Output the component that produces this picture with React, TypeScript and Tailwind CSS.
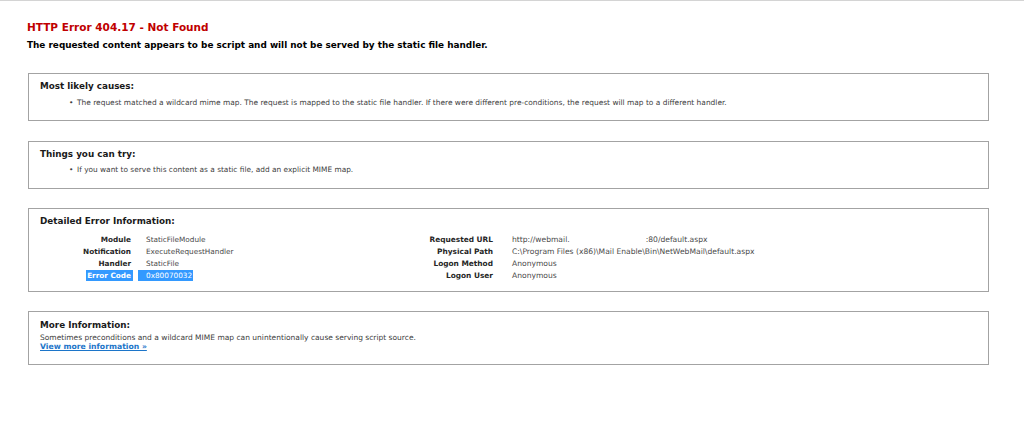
import React from "react";

const font = "font-['Verdana','DejaVu_Sans',sans-serif]";

const leftRows = [
  { label: "Module", value: "StaticFileModule" },
  { label: "Notification", value: "ExecuteRequestHandler" },
  { label: "Handler", value: "StaticFile" },
  { label: "Error Code", value: "0x80070032", selected: true },
];

function Box({ title, children, className = "" }: { title: string; children: React.ReactNode; className?: string }) {
  return (
    <div className={`border border-[#a3a3a3] pl-[11px] pt-[7px] ${className}`}>
      <div className="text-[8.8px] leading-[11px] font-bold text-[#1a1a1a]">{title}</div>
      {children}
    </div>
  );
}

export default function App() {
  return (
    <div className={`min-h-[443px] bg-white border-t border-[#d4d4d4] ${font}`}>
      <div className="pl-[27px] pr-[35px]">
        <h2 className="mt-[20px] text-[10.5px] leading-[13px] font-bold text-[#c00000]">
          HTTP Error 404.17 - Not Found
        </h2>
        <h3 className="mt-[6px] text-[8.9px] leading-[11px] font-bold text-black">
          The requested content appears to be script and will not be served by the static file handler.
        </h3>

        <div className="ml-[1px] mt-[22px] flex flex-col">
          <Box title="Most likely causes:" className="pb-[12px]">
            <div className="mt-[6px] flex text-[7.45px] leading-[10px] text-[#404040]">
              <span className="ml-[29px] w-[8px]">•</span>
              <span>
                The request matched a wildcard mime map. The request is mapped to the static file handler. If there were different pre-conditions, the request will map to a different handler.
              </span>
            </div>
          </Box>

          <Box title="Things you can try:" className="mt-[20px] pb-[13px]">
            <div className="mt-[5px] flex text-[7.4px] leading-[10px] text-[#404040]">
              <span className="ml-[29px] w-[8px]">•</span>
              <span>If you want to serve this content as a static file, add an explicit MIME map.</span>
            </div>
          </Box>

          <Box title="Detailed Error Information:" className="mt-[19px] pb-[9px]">
            <div className="mt-[7px] flex text-[7.3px] leading-[12px]">
              <div className="w-[360px] grid grid-cols-[91px_1fr] gap-x-[6px]">
                {leftRows.map((r) => (
                  <React.Fragment key={r.label}>
                    <div className="text-right font-bold text-[#262626]">
                      {r.selected ? (
                        <span className="-mr-[2px] bg-[#3399ff] text-white pl-[1px] pr-[2px] py-[1px]">{r.label}</span>
                      ) : (
                        r.label
                      )}
                    </div>
                    <div className="text-[#4a4a4a]">
                      {r.selected ? (
                        <span className="ml-[1px] bg-[#3399ff] text-white pl-[8px] pr-[1px] py-[1px]">{r.value}</span>
                      ) : (
                        <span className="pl-[9px]">{r.value}</span>
                      )}
                    </div>
                  </React.Fragment>
                ))}
              </div>
              <div className="grid grid-cols-[93px_1fr] gap-x-[19px] text-[7.4px]">
                <div className="text-right font-bold text-[#262626]">Requested URL</div>
                <div className="text-[7.6px] text-[#4a4a4a]">
                  http://webmail.<span className="inline-block w-[76px]" />:80/default.aspx
                </div>
                <div className="text-right font-bold text-[#262626]">Physical Path</div>
                <div className="text-[7.6px] text-[#4a4a4a]">C:\Program Files (x86)\Mail Enable\Bin\NetWebMail\default.aspx</div>
                <div className="text-right font-bold text-[#262626]">Logon Method</div>
                <div className="text-[7.6px] text-[#4a4a4a]">Anonymous</div>
                <div className="text-right font-bold text-[#262626]">Logon User</div>
                <div className="text-[7.6px] text-[#4a4a4a]">Anonymous</div>
              </div>
            </div>
          </Box>

          <Box title="More Information:" className="mt-[19px] pt-[8px] pb-[13px]">
            <div className="mt-[2px] text-[7.5px] leading-[9px] text-[#404040]">
              Sometimes preconditions and a wildcard MIME map can unintentionally cause serving script source.
            </div>
            <a href="#" className="block text-[7.7px] leading-[9px] font-bold text-[#1c75c9] underline">
              View more information »
            </a>
          </Box>
        </div>
      </div>
    </div>
  );
}
